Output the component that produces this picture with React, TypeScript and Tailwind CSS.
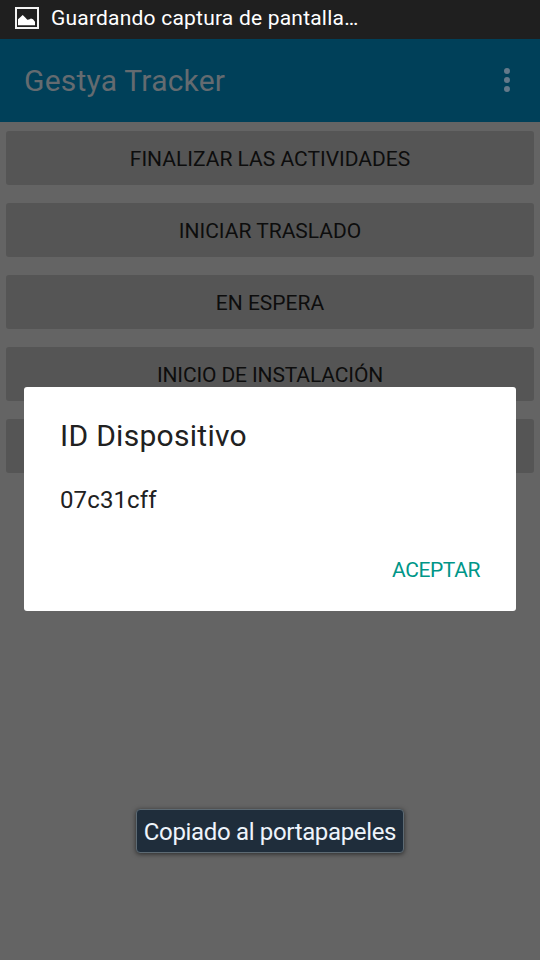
import React from 'react';

const ACTIONS = [
  { label: 'FINALIZAR LAS ACTIVIDADES', spacing: 'tracking-[0px]' },
  { label: 'INICIAR TRASLADO', spacing: 'tracking-[0px]' },
  { label: 'EN ESPERA', spacing: 'tracking-[0px]' },
  { label: 'INICIO DE INSTALACIÓN', spacing: 'tracking-[-0.13px]' },
  { label: '', spacing: '' },
];

function StatusBar() {
  return (
    <div className="flex h-[39px] shrink-0 items-center bg-[#1f1f1f] pl-[15px] pb-[3px]">
      <svg viewBox="0 0 24 22" className="h-[22px] w-6 shrink-0">
        <rect x="1" y="1" width="22" height="20" fill="none" stroke="#f2f2f2" strokeWidth="2" />
        <path d="M3 18.3v-6l2-1.8L7.7 8l2.3 2.2 2.3 2.6 1.7-.4 2-.9 2 .7 2 2.6v3.5z" fill="#fff" />
      </svg>
      <span className="ml-3 text-[21px] leading-none tracking-[0.21px] whitespace-nowrap text-white">
        Guardando captura de pantalla…
      </span>
    </div>
  );
}

function AppBar() {
  return (
    <header className="flex h-[83px] shrink-0 items-center justify-between bg-[#004059] pr-[29px] pl-6">
      <h1 className="text-[30px] leading-none tracking-[0.22px] whitespace-nowrap text-[#646b70]">
        Gestya Tracker
      </h1>
      <svg viewBox="0 0 8 24" className="mt-[-1px] h-6 w-2" fill="#64798a">
        <circle cx="4" cy="3" r="3" />
        <circle cx="4" cy="12" r="3" />
        <circle cx="4" cy="21" r="3" />
      </svg>
    </header>
  );
}

export default function App() {
  return (
    <div className="relative flex h-[960px] w-[540px] flex-col overflow-hidden bg-[#646464] font-['Roboto',sans-serif]">
      <StatusBar />
      <AppBar />

      <main className="flex flex-col gap-[18px] px-1.5 pt-[9px]">
        {ACTIONS.map(({ label, spacing }, i) => (
          <button
            key={i}
            className={`h-[54px] rounded-[3px] bg-[#555555] pt-[2px] text-[21px] leading-none whitespace-nowrap text-[#0d0d0d] ${spacing}`}
          >
            {label}
          </button>
        ))}
      </main>

      {/* Dialog */}
      <div className="absolute top-[387px] left-6 flex h-[224px] w-[492px] flex-col rounded-[3px] bg-white px-9 text-[#212121]">
        <h2 className="mt-[33px] text-[30px] leading-8 tracking-[0.28px] whitespace-nowrap">ID Dispositivo</h2>
        <p className="mt-8 text-2xl leading-8 tracking-[0.12px] whitespace-nowrap">07c31cff</p>
        <button className="mt-[42px] self-end text-[21px] leading-6 tracking-[-0.4px] whitespace-nowrap text-[#009688]">
          ACEPTAR
        </button>
      </div>

      {/* Toast */}
      <div className="absolute top-[809px] left-[136px] flex h-11 w-[268px] items-center justify-center rounded-[4px] border border-[#5d6a73] bg-[#1f2d3b] pt-[2px] text-2xl leading-none tracking-[-0.34px] whitespace-nowrap text-[#eef4fb] shadow-[0_1px_5px_rgba(0,0,0,0.6)]">
        <span>Copiado al portapapeles</span>
      </div>
    </div>
  );
}
